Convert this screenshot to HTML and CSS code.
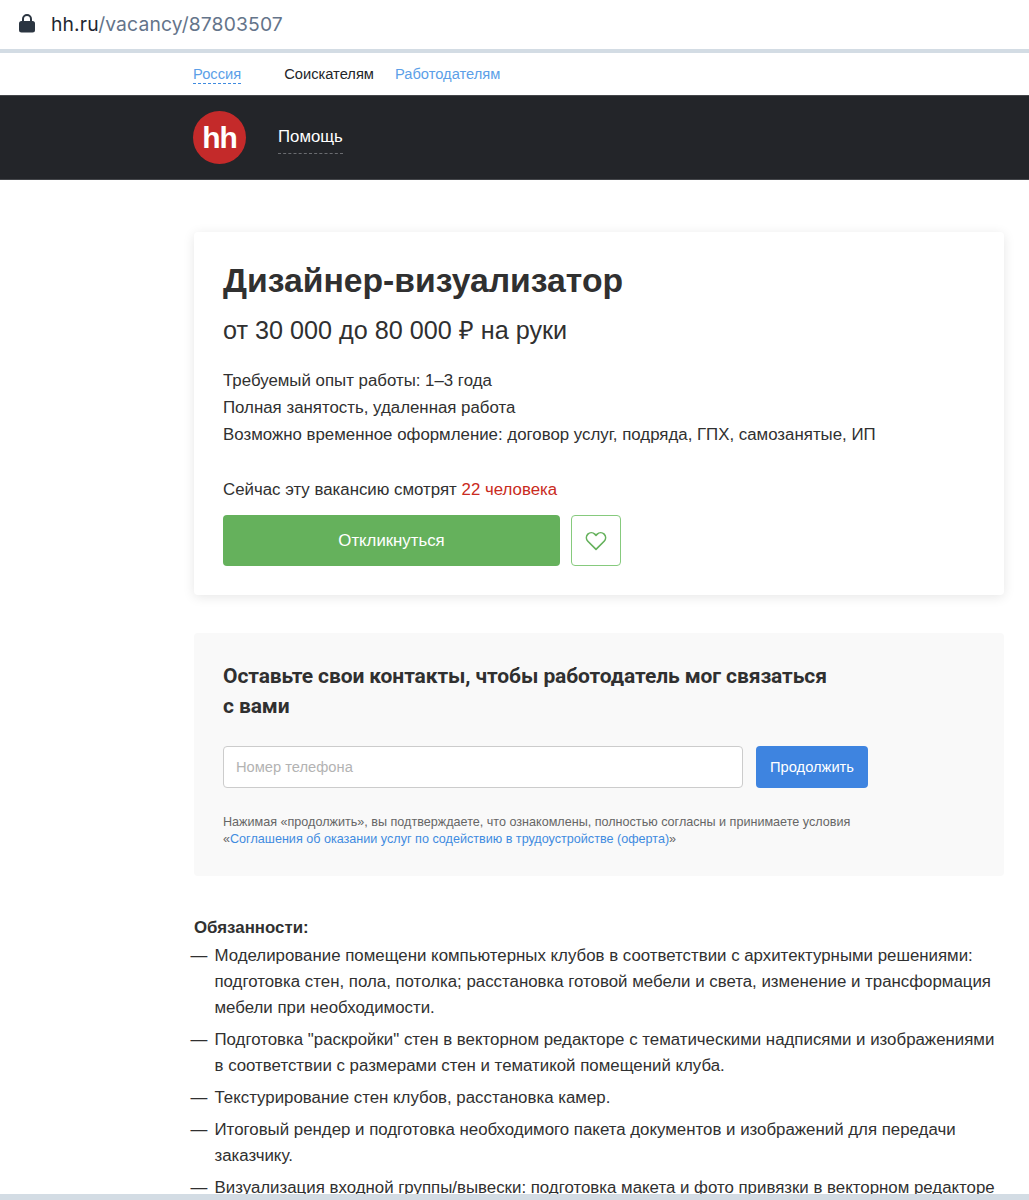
FILE: index.html
```html
<!DOCTYPE html>
<html lang="ru">
<head>
<meta charset="utf-8">
<title>Дизайнер-визуализатор</title>
<link rel="stylesheet" href="styles.css">
</head>
<body>
<div class="urlbar">
  <svg class="lock" width="16" height="20" viewBox="0 0 16 20"><path d="M4 9V6a4 4 0 0 1 8 0v3" fill="none" stroke="#2b3541" stroke-width="2"/><rect x="0" y="8" width="16" height="11.5" rx="2.5" fill="#2b3541"/></svg>
  <span class="url"><span class="host">hh.ru</span>/vacancy/87803507</span>
</div>
<nav class="topnav">
  <a class="region">Россия</a>
  <a class="current">Соискателям</a>
  <a class="employers">Работодателям</a>
</nav>
<header class="brandbar">
  <div class="logo">hh</div>
  <a class="help">Помощь</a>
</header>
<main class="content">
  <section class="card">
    <h1>Дизайнер-визуализатор</h1>
    <p class="salary">от 30 000 до 80 000 ₽ на руки</p>
    <div class="facts">
      <p>Требуемый опыт работы: 1–3 года</p>
      <p>Полная занятость, удаленная работа</p>
      <p>Возможно временное оформление: договор услуг, подряда, ГПХ, самозанятые, ИП</p>
    </div>
    <p class="viewers">Сейчас эту вакансию смотрят <span class="hot">22 человека</span></p>
    <div class="actions">
      <button class="respond">Откликнуться</button>
      <button class="fav" aria-label="В избранное"><svg width="22" height="20" viewBox="0 0 20 18"><path d="M10 16.6 2.6 9.2a4.6 4.6 0 0 1 0-6.4 4.5 4.5 0 0 1 6.3 0L10 3.9l1.1-1.1a4.5 4.5 0 0 1 6.3 0 4.6 4.6 0 0 1 0 6.4z" fill="none" stroke="#65b15c" stroke-width="1.5" stroke-linejoin="round"/></svg></button>
    </div>
  </section>
  <section class="contacts">
    <h2>Оставьте свои контакты, чтобы работодатель мог связаться<br>с вами</h2>
    <form class="phone-form">
      <input class="phone" type="text" placeholder="Номер телефона">
      <button class="continue" type="button">Продолжить</button>
    </form>
    <p class="terms">Нажимая «продолжить», вы подтверждаете, что ознакомлены, полностью согласны и принимаете условия<br>«<a>Соглашения об оказании услуг по содействию в трудоустройстве (оферта)</a>»</p>
  </section>
  <section class="description">
    <h3>Обязанности:</h3>
    <ul>
      <li>Моделирование помещени компьютерных клубов в соответствии с архитектурными решениями: подготовка стен, пола, потолка; расстановка готовой мебели и света, изменение и трансформация мебели при необходимости.</li>
      <li>Подготовка "раскройки" стен в векторном редакторе с тематическими надписями и изображениями в соответствии с размерами стен и тематикой помещений клуба.</li>
      <li>Текстурирование стен клубов, расстановка камер.</li>
      <li>Итоговый рендер и подготовка необходимого пакета документов и изображений для передачи заказчику.</li>
      <li>Визуализация входной группы/вывески: подготовка макета и фото привязки в векторном редакторе</li>
    </ul>
  </section>
</main>
<div class="bottombar"></div>
</body>
</html>
```
FILE: styles.css
```css
* { box-sizing: border-box; }
html, body { margin: 0; height: 1200px; overflow: hidden; background: #fff; }
body { font-family: "Liberation Sans", Arial, sans-serif; font-size: 16.85px; color: #303030; }
p, h1, h2, h3, ul { margin: 0; padding: 0; }

.urlbar { height: 53px; border-bottom: 4px solid #d3dce4; padding: 0 0 3px 19px; display: flex; align-items: center; gap: 16px; }
.lock { flex: none; margin-top: -1px; }
.url { font-family: "Inter", "Liberation Sans", sans-serif; font-size: 19.3px; color: #64748a; letter-spacing: 0.15px; margin-top: 1px; }
.host { color: #1f2730; }

.topnav { height: 42px; padding: 0 0 0 193px; display: flex; align-items: center; font-size: 14.7px; line-height: 18px; }
.topnav a { color: #5c9fe8; }
.topnav .region { border-bottom: 1px dashed #3f8be0; margin-right: 43px; margin-top: 0; padding-bottom: 0; }
.topnav .current { color: #232529; margin-right: 21px; }

.brandbar { height: 85px; background: #232529; border-top: 1px solid #44464a; border-bottom: 1px solid #44464a; padding-left: 193px; display: flex; align-items: center; }
.logo { width: 53px; height: 53px; border-radius: 50%; background: #c42a2a; color: #fff; font-weight: 700; font-size: 30px; letter-spacing: -1px; line-height: 53px; text-align: center; }
.help { color: #fff; font-size: 16.8px; line-height: 20px; margin-left: 32px; padding-bottom: 6px; margin-top: 6px; border-bottom: 1px dashed #6a6c70; }

.content { padding: 52px 25px 0 194px; }
.card { height: 363px; background: #fff; border-radius: 4px; box-shadow: 0 2px 12px rgba(0, 0, 0, 0.1); padding: 27px 29px 0; }
h1 { font-size: 33.7px; line-height: 42px; font-weight: 700; color: #303030; }
.salary { font-size: 25.2px; line-height: 30px; margin-top: 14px; }
.facts { margin-top: 22px; line-height: 27px; }
.viewers { margin-top: 28px; line-height: 27px; }
.hot { color: #c92a21; }
.actions { display: flex; gap: 11px; margin-top: 12px; }
button { font-family: inherit; cursor: pointer; }
.respond { width: 337px; height: 51px; background: #65b15c; color: #fff; border: 0; border-radius: 4px; font-size: 16.8px; }
.fav { width: 50px; height: 51px; background: #fff; border: 1px solid #86ca7d; border-radius: 4px; display: flex; align-items: center; justify-content: center; padding: 0; }

.contacts { margin-top: 38px; height: 243px; background: #f9f9f9; border-radius: 4px; padding: 28px 29px 0; }
h2 { font-family: "Roboto", "Liberation Sans", sans-serif; font-size: 21px; line-height: 30px; font-weight: 700; letter-spacing: -0.1px; color: #303030; }
.phone-form { display: flex; gap: 13px; margin-top: 25px; }
.phone { width: 520px; height: 42px; border: 1px solid #ccc; border-radius: 4px; background: #fff; padding: 0 12px; font: 14.7px "Liberation Sans", Arial, sans-serif; color: #303030; outline: 0; }
.phone::placeholder { color: #b3b3b3; opacity: 1; }
.continue { width: 112px; height: 42px; background: #3e84e0; color: #fff; border: 0; border-radius: 4px; font-size: 14.7px; padding: 0; }
.terms { margin-top: 26px; font-size: 12.6px; line-height: 17px; color: #666; }
.terms a { color: #3f8be0; }

.description { margin-top: 39px; line-height: 26px; }
h3 { font-size: 16.85px; line-height: 26px; font-weight: 700; margin-bottom: 2px; }
ul { list-style: none; }
li { position: relative; padding-left: 20.5px; margin-bottom: 6px; }
li::before { content: "—"; position: absolute; left: -3.5px; top: 0; }

.bottombar { position: fixed; left: 0; right: 0; bottom: 0; height: 6px; background: #d3dce4; }
```
